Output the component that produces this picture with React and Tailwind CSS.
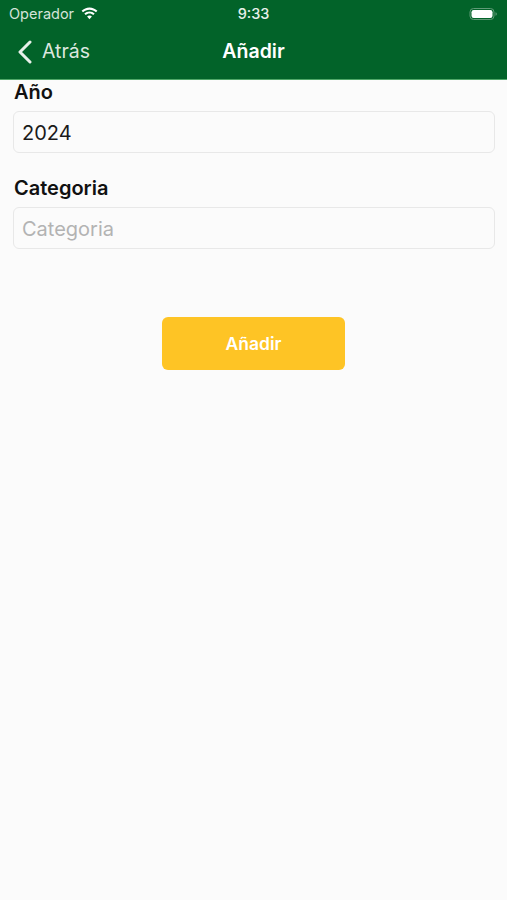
export default function App() {
  return (
    <div className="w-[507px] h-[900px] bg-[#fbfbfb] flex flex-col font-['Inter','Liberation_Sans',sans-serif]">
      <header className="h-[80px] shrink-0 bg-[#026329] border-b border-b-[#4fa868] text-white flex flex-col">
        <div className="h-[27px] flex items-center justify-between pl-[9px] pr-[9px] relative">
          <div className="flex items-center gap-[6px] text-[14.5px] text-[#d5e3d9]">
            <span>Operador</span>
            <svg width="19" height="15" viewBox="0 0 19 14" fill="white">
              <path d="M9.5 3.2c2.5 0 4.8 1 6.5 2.6l1.4-1.5C15.3 2.3 12.5 1 9.5 1S3.700 2.300 1.600 4.300L3 5.800C4.700 4.200 7 3.200 9.500 3.200z" />
              <path d="M9.500 7.100c1.500 0 2.800.6 3.800 1.500l1.400-1.500c-1.400-1.300-3.200-2.100-5.200-2.100s-3.800.8-5.200 2.100l1.400 1.500c1-.9 2.300-1.500 3.800-1.500z" />
              <path d="M9.500 9c-1 0-1.800.4-2.400 1l2.400 2.700 2.400-2.700c-.6-.6-1.400-1-2.400-1z" />
            </svg>
          </div>
          <span className="absolute left-0 right-0 text-center text-[14.5px] font-medium text-[#e8f0ea]">9:33</span>
          <svg width="29" height="14" viewBox="0 0 29 14">
            <rect x="1" y="1.500" width="24" height="11" rx="3.500" fill="none" stroke="#5f9a76" strokeWidth="1" />
            <rect x="2.500" y="3" width="21" height="8" rx="2.200" fill="white" />
            <path d="M26.500 5.300c.9.300 1.300 1 1.300 1.700s-.4 1.400-1.300 1.700z" fill="#5f9a76" />
          </svg>
        </div>
        <div className="flex-1 relative flex items-center justify-center pb-[2px]">
          <div className="absolute left-[17px] top-0 bottom-[2px] flex items-center gap-[10px]">
            <svg width="15" height="24" viewBox="0 0 15 24" fill="none" stroke="#e8f0ea" strokeWidth="3" strokeLinecap="round" strokeLinejoin="round">
              <path d="M13 2 L3 12 L13 22" />
            </svg>
            <span className="text-[19.5px] text-[#dbe7df]">Atrás</span>
          </div>
          <span className="text-[19.5px] font-semibold">Añadir</span>
        </div>
      </header>
      <main className="flex flex-col pl-[13px] pr-[12px]">
        <label className="text-[20px] font-semibold leading-[22px] text-[#111] mt-[1px] pl-[1px]">Año</label>
        <div className="mt-[8px] h-[42px] rounded-[6px] border border-[#e8e8e8] bg-[#fbfbfb] flex items-center pl-[8px] pt-[1px] text-[20px] text-[#1a1a1a]">2024</div>
        <label className="text-[20px] font-semibold leading-[22px] text-[#111] mt-[24px] pl-[1px]">Categoria</label>
        <div className="mt-[8px] h-[42px] rounded-[6px] border border-[#e8e8e8] bg-[#fbfbfb] flex items-center pl-[8px] pt-[1px] text-[20px] text-[#b3b3b3]">Categoria</div>
        <div className="flex justify-center mt-[68px] pr-[1px]">
          <button className="w-[183px] h-[53px] rounded-[6px] bg-[#fec425] text-white text-[17.5px] font-semibold flex items-center justify-center pt-[1px]">Añadir</button>
        </div>
      </main>
    </div>
  );
}
